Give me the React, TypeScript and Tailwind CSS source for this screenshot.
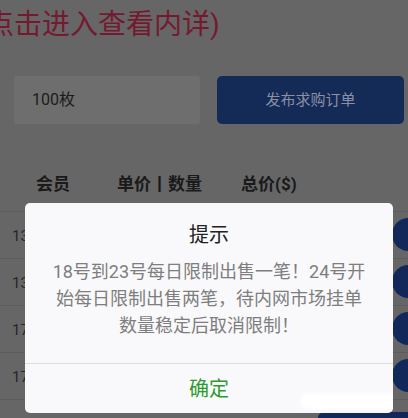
import React from "react";

const rows = ["13800000000", "13900000000", "17700000000", "17800000000"];

export default function App() {
  const font = { fontFamily: "Roboto, 'Noto Sans CJK SC', sans-serif" };
  return (
    <div
      className="relative w-[408px] h-[418px] overflow-hidden bg-[#666666]"
      style={font}
    >
      {/* underlying page */}
      <div className="ml-[-14px] mt-[7px] h-[36px] text-[28px] leading-[36px] text-[#741a30] whitespace-nowrap">
        点击进入查看内详)
      </div>

      <div className="mt-[33px] flex gap-[17px] pl-[14px] pr-[4px]">
        <div className="h-[48px] w-[186px] rounded-[3px] bg-[#6e6e6e] flex items-center pl-[18px] text-[16px] text-[#1c1c1c]">
          100枚
        </div>
        <div className="h-[48px] w-[187px] rounded-[5px] bg-[#142a57] flex items-center justify-center text-[15px] text-[#8a91a3]">
          发布求购订单
        </div>
      </div>

      <div className="mt-[37px] h-[51px] pb-[3px] flex items-center border-b border-[#5c5c5c] text-[17px] font-bold text-[#1a1a1a]">
        <div className="pl-[36px] w-[117px]">会员</div>
        <div className="w-[124px]">单价丨数量</div>
        <div>总价($)</div>
      </div>

      {rows.map((r) => (
        <div
          key={r}
          className="relative h-[47px] flex items-center border-b border-[#5c5c5c] pl-[12px] text-[15px] text-[#262626]"
        >
          <span className="pt-[2px]">{r}</span>
          <div className="absolute left-[392px] top-[6px] h-[33px] w-[60px] rounded-full bg-[#13285a]" />
        </div>
      ))}
      <div className="relative h-[47px] flex items-center pl-[12px] text-[17px] text-[#262626]">
        <span className="absolute left-[155px] top-[14px]">1.0</span>
        <span className="absolute left-[264px] top-[14px]">100</span>
        <div className="absolute left-[318px] top-[12px] h-[40px] w-[110px] rounded-[6px] bg-[#13285a] flex items-start pt-[4px] pl-[26px] text-[15px] text-[#c8cde0]">
          立即出售
        </div>
      </div>

      {/* dialog */}
      <div className="absolute left-[25px] top-[203px] w-[368px] h-[210px] rounded-[5px] bg-[#f9f9fb] flex flex-col overflow-hidden">
        <div className="pt-[18px] h-[46px] text-center text-[20px] leading-[28px] text-[#222222]">
          提示
        </div>
        <div className="mt-[9px] px-[24px] text-center text-[18px] leading-[27px] text-[#7e7e7e]">
          18号到23号每日限制出售一笔！24号开始每日限制出售两笔，待内网市场挂单数量稳定后取消限制！
        </div>
        <div className="mt-auto border-t border-[#dedede] h-[50px] flex items-center justify-center text-[20px] text-[#2c9a2e]">
          确定
        </div>
        <div className="absolute left-[275px] top-[190px] h-[16px] w-[110px] rounded-full bg-white blur-[2px]" />
      </div>
    </div>
  );
}
